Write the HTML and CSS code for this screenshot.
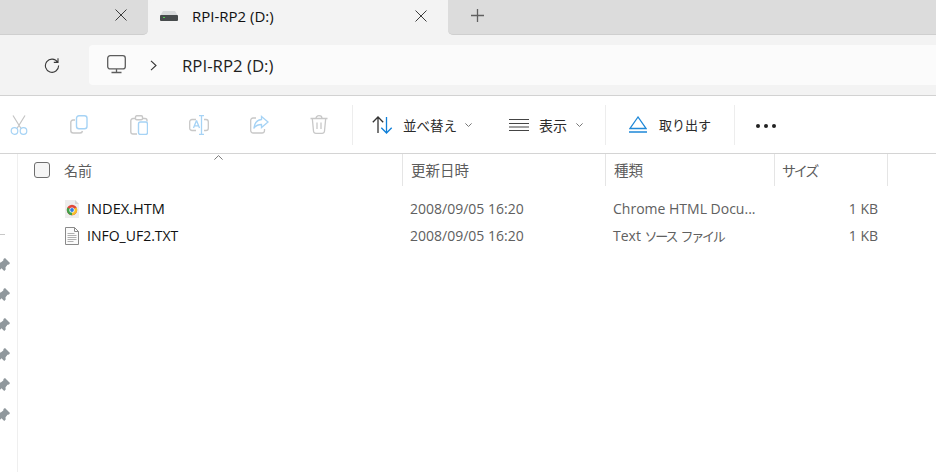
FILE: index.html
```html
<!DOCTYPE html>
<html lang="ja">
<head>
<meta charset="utf-8">
<title>RPI-RP2 (D:)</title>
<link rel="stylesheet" href="styles.css">
</head>
<body>
<div class="window">
  <div class="tabstrip">
    <div class="tab-prev">
      <svg class="close" viewBox="0 0 12 12" width="12" height="12"><path d="M.5.5l11 11M11.5.5l-11 11"/></svg>
    </div>
    <div class="tab-active">
      <svg class="drive" viewBox="0 0 18 10" width="18" height="10">
        <path d="M3 0h12l3 5H0z" fill="#d8dadb"/>
        <rect x="0" y="4" width="18" height="6" rx="1" fill="#474b4c"/>
        <rect x="3" y="6" width="2" height="1" fill="#4fd14f"/>
      </svg>
      <span class="tab-title">RPI-RP2 (D:)</span>
      <svg class="close" viewBox="0 0 12 12" width="12" height="12"><path d="M.5.5l11 11M11.5.5l-11 11"/></svg>
    </div>
    <div class="tab-new">
      <svg viewBox="0 0 13 13" width="13" height="13"><path d="M6.5 0v13M0 6.5h13" stroke="#606060" stroke-width="1.3" fill="none"/></svg>
    </div>
  </div>

  <div class="addressrow">
    <svg class="refresh" viewBox="0 0 16 16" width="16" height="16"><path d="M13.6 5.2A6.6 6.6 0 1 0 14.6 8.5M14 1.2v4.2H9.8" fill="none" stroke="#3a3a3a" stroke-width="1.1"/></svg>
    <div class="addressbar">
      <svg class="pc" viewBox="0 0 20 19" width="20" height="19"><rect x=".7" y=".7" width="17.6" height="13.2" rx="2.5" fill="none" stroke="#5c5c5c" stroke-width="1.3"/><path d="M9.5 14v3M4.5 17.5h10" stroke="#5c5c5c" stroke-width="1.3" fill="none"/></svg>
      <svg class="crumb" viewBox="0 0 7 11" width="7" height="11"><path d="M1 .8l5 4.7-5 4.7" fill="none" stroke="#333" stroke-width="1.1"/></svg>
      <span class="path">RPI-RP2 (D:)</span>
    </div>
  </div>

  <div class="toolbar">
    <div class="tool-group">
      <span class="tool"><svg viewBox="0 0 18 20" width="18" height="20" fill="none" stroke-width="1.2"><path d="M3 .5l8 13M15 .5l-8 13" stroke="#c4c4c4"/><circle cx="4.5" cy="16" r="3.3" stroke="#a6d3f5"/><circle cx="13.5" cy="16" r="3.3" stroke="#a6d3f5"/></svg></span>
      <span class="tool"><svg viewBox="0 0 18 19" width="18" height="19" fill="none" stroke-width="1.4"><path d="M5 5H3a2.2 2.2 0 0 0-2.200 2.200V15.500A2.500 2.500 0 0 0 3.300 18H10a2.500 2.500 0 0 0 2.500-2" stroke="#c8c8c8"/><rect x="6.500" y=".8" width="10.500" height="13" rx="2.500" stroke="#a6d3f5"/></svg></span>
      <span class="tool"><svg viewBox="0 0 18 20" width="18" height="20" fill="none" stroke-width="1.4"><path d="M5.500 3.500H3A2.200 2.200 0 0 0 .8 5.700V17A2.200 2.200 0 0 0 3 19h4M12.500 3.500H15c1.200 0 2 .8 2 2v1" stroke="#c8c8c8"/><rect x="5.500" y=".8" width="7" height="4" rx="1.200" stroke="#c8c8c8"/><rect x="8.500" y="7" width="9" height="12.500" rx="2" stroke="#a6d3f5"/></svg></span>
      <span class="tool"><svg viewBox="0 0 20 20" width="20" height="20" fill="none" stroke-width="1.3"><path d="M7 4.500H3A2.300 2.300 0 0 0 .7 6.800v6.400A2.300 2.300 0 0 0 3 15.500h4M15 4.500h2a2.300 2.300 0 0 1 2.300 2.300v6.400a2.300 2.300 0 0 1-2.300 2.300h-2" stroke="#c8c8c8"/><path d="M12.500.7v18.600M10 .7h5M10 19.300h5M4.500 13L7.300 6h.4L10.500 13M5.500 10.800h4" stroke="#a6d3f5"/></svg></span>
      <span class="tool"><svg viewBox="0 0 19 19" width="19" height="19" fill="none" stroke-width="1.3"><path d="M6 3H3A2.300 2.300 0 0 0 .7 5.300V15.500A2.500 2.500 0 0 0 3.200 18H12a2.500 2.500 0 0 0 2.500-2.500V14" stroke="#c8c8c8"/><path d="M11.500 1.500l6.500 5.500-6.500 5.500V9.500C8 9.500 5.500 10.500 3.800 13.500 4.300 8.500 7 5 11.500 4.500z" stroke="#a6d3f5"/></svg></span>
      <span class="tool"><svg viewBox="0 0 18 19" width="18" height="19" fill="none" stroke="#c8c8c8" stroke-width="1.3"><path d="M.5 3.500h17M6 3.500C6 1.800 7.200.7 9 .7s3 1.100 3 2.800M2.300 3.500l1.200 12.500A2.400 2.400 0 0 0 6 18.300h6a2.400 2.400 0 0 0 2.500-2.300l1.200-12.500M7 7.500v6.500M11 7.500v6.500"/></svg></span>
    </div>
    <span class="divider divider-first"></span>
    <div class="action action-sort">
      <svg viewBox="0 0 21 18" width="21" height="18" fill="none" stroke-width="1.3"><path d="M6 17V1M.8 6.200L6 1l5.200 5.200" stroke="#333"/><path d="M14.500 1v16M9.300 11.800l5.200 5.200 5.200-5.200" stroke="#0f7fd8"/></svg>
      <span class="action-label">並べ替え</span>
      <svg class="chev" viewBox="0 0 7 4" width="7" height="4"><path d="M.4.4L3.500 3.500 6.600.4"/></svg>
    </div>
    <div class="action action-view">
      <svg viewBox="0 0 20 12" width="20" height="12" fill="none" stroke="#444" stroke-width="1.100"><path d="M0 .5h20M0 4.500h20M0 8h20M0 11.500h20"/></svg>
      <span class="action-label">表示</span>
      <svg class="chev" viewBox="0 0 7 4" width="7" height="4"><path d="M.4.4L3.500 3.500 6.600.4"/></svg>
    </div>
    <span class="divider divider-second"></span>
    <div class="action action-eject">
      <svg viewBox="0 0 18 17" width="18" height="17" fill="none" stroke="#1e88d8" stroke-width="1.300"><path d="M9 1L1 12.500h16zM0 16h18"/></svg>
      <span class="action-label">取り出す</span>
    </div>
    <span class="divider divider-third"></span>
    <div class="more"><i></i><i></i><i></i></div>
  </div>

  <div class="content">
    <aside class="sidebar">
      <span class="tick"></span>
      <svg class="pin" viewBox="0 0 16 16" width="16" height="16"><path d="M10 1l5 5-1 1.500-1.500.2-2 2.500.2 2.300-1.500 1.500-2.700-2.700L2 15.500.5 14l4.200-4.500L2 6.800 3.500 5.300l2.300.2 2.500-2 .2-1.500z"/></svg>
      <svg class="pin" viewBox="0 0 16 16" width="16" height="16"><path d="M10 1l5 5-1 1.500-1.500.2-2 2.500.2 2.300-1.500 1.500-2.700-2.700L2 15.500.5 14l4.200-4.500L2 6.800 3.500 5.300l2.300.2 2.500-2 .2-1.500z"/></svg>
      <svg class="pin" viewBox="0 0 16 16" width="16" height="16"><path d="M10 1l5 5-1 1.500-1.500.2-2 2.500.2 2.300-1.500 1.500-2.700-2.700L2 15.500.5 14l4.200-4.500L2 6.800 3.500 5.300l2.300.2 2.500-2 .2-1.500z"/></svg>
      <svg class="pin" viewBox="0 0 16 16" width="16" height="16"><path d="M10 1l5 5-1 1.500-1.500.2-2 2.500.2 2.300-1.500 1.500-2.700-2.700L2 15.500.5 14l4.200-4.500L2 6.800 3.500 5.300l2.300.2 2.500-2 .2-1.500z"/></svg>
      <svg class="pin" viewBox="0 0 16 16" width="16" height="16"><path d="M10 1l5 5-1 1.500-1.500.2-2 2.500.2 2.300-1.500 1.500-2.700-2.700L2 15.500.5 14l4.200-4.500L2 6.800 3.500 5.300l2.300.2 2.500-2 .2-1.500z"/></svg>
      <svg class="pin" viewBox="0 0 16 16" width="16" height="16"><path d="M10 1l5 5-1 1.500-1.500.2-2 2.500.2 2.300-1.500 1.500-2.700-2.700L2 15.500.5 14l4.200-4.500L2 6.800 3.500 5.300l2.300.2 2.500-2 .2-1.500z"/></svg>
    </aside>
    <main class="list">
      <div class="columns">
        <div class="col col-name">
          <span class="checkbox"></span>
          <span>名前</span>
          <svg class="sort-caret" viewBox="0 0 9 5" width="9" height="5"><path d="M.4 4.600L4.500.6l4.100 4"/></svg>
        </div>
        <div class="col">更新日時</div>
        <div class="col">種類</div>
        <div class="col col-kana">サイズ</div>
      </div>
      <div class="row">
        <div class="cell-name">
          <svg class="file-icon" viewBox="0 0 16 18" width="16" height="18">
            <path d="M1 0h10l4 4v14H1z" fill="#eeeeee"/>
            <path d="M11 0l4 4h-4z" fill="#d4d4d4"/>
            <circle cx="8" cy="10" r="5.200" fill="#e0483a"/>
            <path d="M8 10l4.500 -2.600A5.200 5.200 0 0 1 8 15.200z" fill="#f6c02c"/>
            <path d="M8 10v5.200A5.200 5.200 0 0 1 3.500 7.400z" fill="#3fa14a"/>
            <circle cx="8" cy="10" r="2.600" fill="#fff"/>
            <circle cx="8" cy="10" r="1.900" fill="#2f7fe0"/>
          </svg>
          <span class="file-name">INDEX.HTM</span>
        </div>
        <div class="cell-meta">2008/09/05 16:20</div>
        <div class="cell-meta">Chrome HTML Docu...</div>
        <div class="cell-meta cell-size">1 KB</div>
      </div>
      <div class="row">
        <div class="cell-name">
          <svg class="file-icon" viewBox="0 0 16 18" width="16" height="18" fill="none" stroke="#8a8a8a">
            <path d="M1.500.5h9l4 4v13h-13zM10.500.5v4h4" fill="#fbfbfb"/>
            <path d="M3.500 6.500h7M3.500 8.500h9M3.500 10.500h9M3.500 12.500h9M3.500 14.500h6" stroke="#b0b0b0"/>
          </svg>
          <span>INFO_UF2.TXT</span>
        </div>
        <div class="cell-meta">2008/09/05 16:20</div>
        <div class="cell-meta">Text <span class="kana">ソース ファイル</span></div>
        <div class="cell-meta cell-size">1 KB</div>
      </div>
    </main>
  </div>
</div>
</body>
</html>
```
FILE: styles.css
```css
* { box-sizing: border-box; }
html, body { margin: 0; padding: 0; height: 100%; }
body {
  background: #fff;
  overflow: hidden;
  font-family: "Open Sans", "Noto Sans CJK JP", sans-serif;
  font-size: 14px;
  color: #1a1a1a;
}
.window { width: 936px; height: 472px; display: flex; flex-direction: column; overflow: hidden; }
svg { display: block; flex: none; }

/* Tabs */
.tabstrip { height: 35px; display: flex; background: #f3f3f3; flex: none; }
.tab-prev {
  width: 148px;
  background: #dcdcdc;
  border-bottom: 1px solid #cfcfcf;
  border-bottom-right-radius: 5px;
  display: flex;
  align-items: center;
  justify-content: flex-end;
  padding: 0 21px 4px 0;
}
.close path { stroke: #3c3c3c; stroke-width: 1; fill: none; }
.tab-active {
  width: 300px;
  background: #f3f3f3;
  border-radius: 8px 8px 0 0;
  display: flex;
  align-items: center;
  padding: 0 21px 4px 12px;
}
.drive { margin-right: 14px; }
.tab-title { flex: 1; color: #111; font-size: 15px; }
.tab-new {
  flex: 1;
  background: #dcdcdc;
  border-bottom: 1px solid #cfcfcf;
  border-bottom-left-radius: 5px;
  display: flex;
  align-items: center;
  padding: 0 0 3px 23px;
}

/* Address row */
.addressrow {
  height: 61px;
  background: #f3f3f3;
  border-bottom: 1px solid #d2d2d2;
  display: flex;
  align-items: center;
  padding: 0 0 0 44px;
  flex: none;
}
.addressbar {
  margin-left: 29px;
  flex: 1;
  height: 40px;
  background: #fbfbfb;
  border-radius: 4px 0 0 4px;
  display: flex;
  align-items: center;
  padding-left: 18px;
}
.crumb { margin-left: 23px; }
.path { margin-left: 25px; font-size: 16.8px; color: #1f1f1f; }
.pc { margin-top: -2px; }

/* Toolbar */
.toolbar {
  height: 58px;
  background: #fff;
  border-bottom: 1px solid #d4d4d4;
  display: flex;
  align-items: center;
  flex: none;
}
.tool-group { display: flex; margin-left: -11px; }
.tool { width: 60px; display: flex; justify-content: center; }
.divider { width: 1px; height: 40px; background: #ededed; flex: none; }
.divider-first { margin-left: 3px; }
.action { display: flex; align-items: center; }
.action-label { font-size: 14px; color: #2b2b2b; }
.action-sort { margin-left: 19px; }
.action-sort .action-label { margin-left: 10px; font-size: 13.5px; }
.action-sort .chev { margin-left: 8px; }
.action-view { margin-left: 37px; }
.action-view .action-label { margin-left: 10px; }
.action-view .chev { margin-left: 9px; }
.divider-second { margin-left: 22px; }
.action-eject { margin-left: 23px; }
.action-eject .action-label { margin-left: 12px; font-size: 13px; }
.divider-third { margin-left: 23px; }
.chev path { fill: none; stroke: #777; stroke-width: 1; }
.more { display: flex; gap: 4px; margin: 2px 0 0 21px; }
.more i { width: 4px; height: 4px; border-radius: 50%; background: #222; }

/* Content */
.content { flex: 1; display: flex; min-height: 0; }
.sidebar {
  width: 18px;
  border-right: 1px solid #efefef;
  flex: none;
  display: flex;
  flex-direction: column;
  padding-top: 102px;
  overflow: hidden;
}
.tick { width: 5px; height: 1px; background: #c8c8c8; margin-bottom: 22px; margin-top: -22px; }
.pin { margin: 0 0 14px -5px; fill: #8f979c; }
.list { flex: 1; min-width: 0; }
.columns, .row {
  display: grid;
  grid-template-columns: 385px 203px 169px 113px;
}
.columns { height: 32px; margin-bottom: 9px; }
.col {
  border-right: 1px solid #e5e5e5;
  padding-left: 8px;
  display: flex;
  align-items: center;
  font-size: 14.5px;
  color: #5c5c5c;
  padding-bottom: 1px;
}
.col-kana { padding-left: 7px; font-size: 14px; letter-spacing: -2.2px; }
.col-name { padding-left: 16px; position: relative; gap: 14px; font-size: 14px; }
.checkbox {
  width: 16px;
  height: 16px;
  border: 1px solid #6e6e6e;
  border-radius: 3px;
  background: #f5f5f5;
}
.sort-caret { position: absolute; left: 196px; top: 1px; fill: none; stroke: #7a7a7a; stroke-width: 1; }
.row { height: 27px; align-items: center; }
.cell-name { display: flex; align-items: center; padding-left: 46px; gap: 7px; font-size: 14px; color: #111; }
.file-name { font-size: 14.6px; margin-bottom: 2px; }
.cell-meta { padding-left: 7px; font-size: 14px; color: #606060; white-space: nowrap; }
.kana { font-size: 13px; letter-spacing: -2.2px; word-spacing: 3px; }
.cell-size { text-align: right; padding-right: 10px; }
```
